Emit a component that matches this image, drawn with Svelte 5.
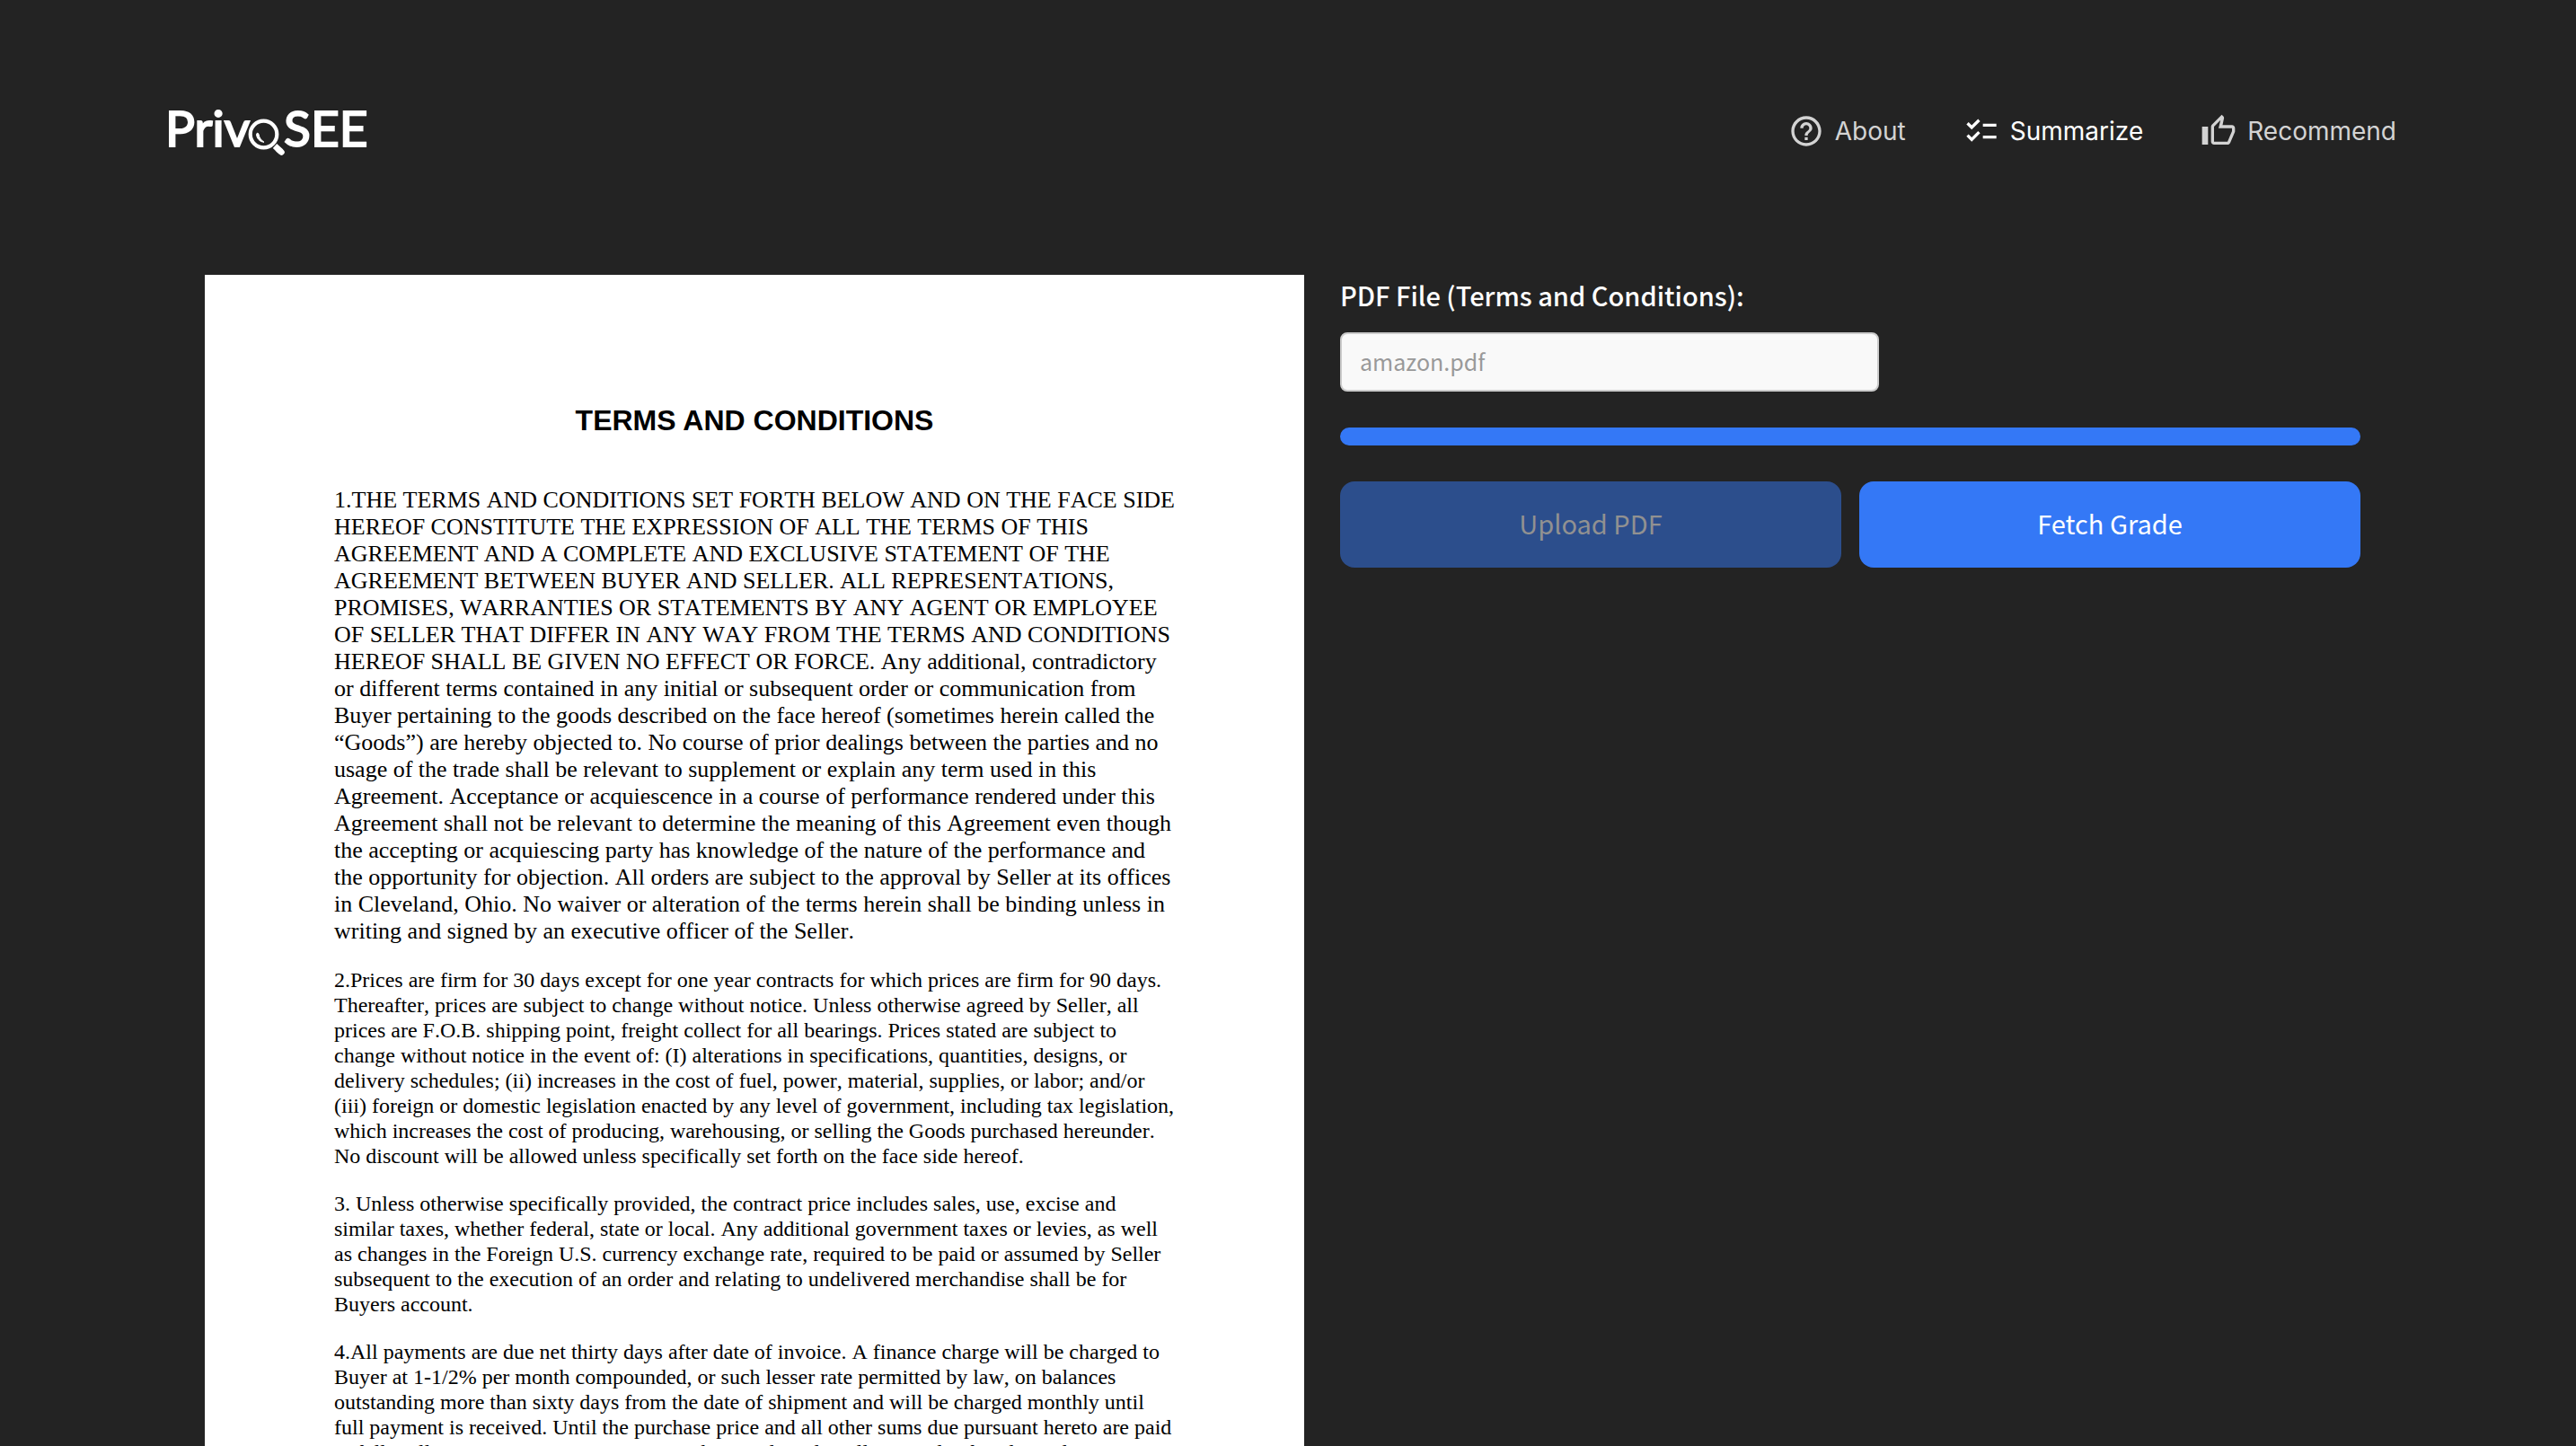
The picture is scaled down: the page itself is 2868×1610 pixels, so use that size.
<script>
  const paragraphs = [
    {
      large: true,
      lines: [
        '1.THE TERMS AND CONDITIONS SET FORTH BELOW AND ON THE FACE SIDE',
        'HEREOF CONSTITUTE THE EXPRESSION OF ALL THE TERMS OF THIS',
        'AGREEMENT AND A COMPLETE AND EXCLUSIVE STATEMENT OF THE',
        'AGREEMENT BETWEEN BUYER AND SELLER. ALL REPRESENTATIONS,',
        'PROMISES, WARRANTIES OR STATEMENTS BY ANY AGENT OR EMPLOYEE',
        'OF SELLER THAT DIFFER IN ANY WAY FROM THE TERMS AND CONDITIONS',
        'HEREOF SHALL BE GIVEN NO EFFECT OR FORCE. Any additional, contradictory',
        'or different terms contained in any initial or subsequent order or communication from',
        'Buyer pertaining to the goods described on the face hereof (sometimes herein called the',
        '“Goods”) are hereby objected to. No course of prior dealings between the parties and no',
        'usage of the trade shall be relevant to supplement or explain any term used in this',
        'Agreement. Acceptance or acquiescence in a course of performance rendered under this',
        'Agreement shall not be relevant to determine the meaning of this Agreement even though',
        'the accepting or acquiescing party has knowledge of the nature of the performance and',
        'the opportunity for objection. All orders are subject to the approval by Seller at its offices',
        'in Cleveland, Ohio. No waiver or alteration of the terms herein shall be binding unless in',
        'writing and signed by an executive officer of the Seller.'
      ]
    },
    {
      lines: [
        '2.Prices are firm for 30 days except for one year contracts for which prices are firm for 90 days.',
        'Thereafter, prices are subject to change without notice. Unless otherwise agreed by Seller, all',
        'prices are F.O.B. shipping point, freight collect for all bearings. Prices stated are subject to',
        'change without notice in the event of: (I) alterations in specifications, quantities, designs, or',
        'delivery schedules; (ii) increases in the cost of fuel, power, material, supplies, or labor; and/or',
        '(iii) foreign or domestic legislation enacted by any level of government, including tax legislation,',
        'which increases the cost of producing, warehousing, or selling the Goods purchased hereunder.',
        'No discount will be allowed unless specifically set forth on the face side hereof.'
      ]
    },
    {
      lines: [
        '3. Unless otherwise specifically provided, the contract price includes sales, use, excise and',
        'similar taxes, whether federal, state or local. Any additional government taxes or levies, as well',
        'as changes in the Foreign U.S. currency exchange rate, required to be paid or assumed by Seller',
        'subsequent to the execution of an order and relating to undelivered merchandise shall be for',
        'Buyers account.'
      ]
    },
    {
      lines: [
        '4.All payments are due net thirty days after date of invoice. A finance charge will be charged to',
        'Buyer at 1-1/2% per month compounded, or such lesser rate permitted by law, on balances',
        'outstanding more than sixty days from the date of shipment and will be charged monthly until',
        'full payment is received. Until the purchase price and all other sums due pursuant hereto are paid',
        'in full, Seller retains a security interest in the Goods and in all proceeds of said Goods. Buyer'
      ]
    }
  ];
</script>

<div class="app">
  <header>
    <a class="logo" href="#home" aria-label="PrivoSEE">
      <span>Priv</span>
      <svg viewBox="0 0 42 42" aria-hidden="true">
        <circle cx="17.500" cy="17.500" r="14.800" fill="none" stroke="#fff" stroke-width="4.200" />
        <path d="M9.500 17.500c.3 4.800 3.800 8.500 8.500 8.800-2.600-1.800-5.500-4.700-6-8.900-.3-1.600-2.300-1.500-2.500.1z" fill="#fff" stroke="#fff" />
        <path d="M30 30.500l7 6.500" stroke="#fff" stroke-width="6.500" />
        <path d="M34 34.500l3.500 3" stroke="#fff" stroke-width="6.500" stroke-linecap="round" />
      </svg>
      <span>SEE</span>
    </a>
    <nav>
      <a href="#about">
        <svg viewBox="0 0 24 24" aria-hidden="true"><path d="M11 18h2v-2h-2v2zm1-16C6.480 2 2 6.480 2 12s4.480 10 10 10 10-4.480 10-10S17.520 2 12 2zm0 18c-4.410 0-8-3.590-8-8s3.590-8 8-8 8 3.590 8 8-3.590 8-8 8zm0-14c-2.210 0-4 1.790-4 4h2c0-1.100.9-2 2-2s2 .9 2 2c0 2-3 1.750-3 5h2c0-2.250 3-2.500 3-5 0-2.210-1.790-4-4-4z" /></svg>
        About
      </a>
      <a href="#summarize" class="active" aria-current="page">
        <svg viewBox="0 0 24 24" aria-hidden="true"><path d="M22 7h-9v2h9V7zm0 8h-9v2h9v-2zM5.540 11L2 7.460l1.410-1.410 2.120 2.120 4.240-4.240 1.410 1.410L5.540 11zm0 8L2 15.460l1.410-1.410 2.120 2.120 4.240-4.240 1.410 1.410L5.540 19z" /></svg>
        Summarize
      </a>
      <a href="#recommend">
        <svg viewBox="0 0 24 24" aria-hidden="true"><path d="M9 21h9c.83 0 1.540-.5 1.840-1.220l3.020-7.050c.09-.23.14-.47.14-.73v-2c0-1.100-.9-2-2-2h-6.310l.95-4.570.03-.32c0-.41-.17-.79-.44-1.060L14.170 1 7.580 7.590C7.220 7.950 7 8.450 7 9v10c0 1.100.9 2 2 2zM9 9l4.340-4.340L12 10h9v2l-3 7H9V9zM1 9h4v12H1z" /></svg>
        Recommend
      </a>
    </nav>
  </header>

  <main>
    <article>
      <h1>TERMS AND CONDITIONS</h1>
      {#each paragraphs as p}
        <p class:large={p.large}>{p.lines.join('\n')}</p>
      {/each}
    </article>

    <form onsubmit={(e) => e.preventDefault()}>
      <label for="pdf">PDF File (Terms and Conditions):</label>
      <input id="pdf" type="text" placeholder="amazon.pdf" />
      <div class="progress" role="progressbar" aria-label="Upload progress" aria-valuenow="100" aria-valuemin="0" aria-valuemax="100"></div>
      <div class="actions">
        <button type="button" disabled>Upload PDF</button>
        <button type="submit">Fetch Grade</button>
      </div>
    </form>
  </main>
</div>

<style>
  :global(body) {
    background: #232323;
  }
  .app {
    box-sizing: border-box;
    height: 100vh;
    overflow: hidden;
    padding: 80px 200px 0 188px;
    display: flex;
    flex-direction: column;
    gap: 94px;
    color: #fff;
    font-family: "Noto Sans CJK SC", "Noto Sans", sans-serif;
  }
  header {
    display: flex;
    align-items: center;
    justify-content: space-between;
    height: 132px;
    flex: none;
  }
  .logo {
    display: flex;
    align-items: center;
    margin-left: -4px;
    padding-bottom: 8px;
    color: #fff;
    text-decoration: none;
    font: 400 55px/64px Lato, sans-serif;
    -webkit-text-stroke: 2px #fff;
  }
  .logo svg {
    width: 42px;
    height: 42px;
    margin: 22px -2px 0 -2px;
  }
  nav {
    display: flex;
    gap: 64px;
  }
  nav a {
    display: flex;
    align-items: center;
    gap: 12px;
    color: #d3d3d3;
    text-decoration: none;
    font: 400 28px/40px Inter, sans-serif;
  }
  nav a.active {
    color: #fff;
  }
  nav svg {
    width: 40px;
    height: 40px;
    fill: currentColor;
  }
  main {
    flex: 1;
    min-height: 0;
    display: grid;
    grid-template-columns: 1224fr 1136fr;
    gap: 40px;
    align-items: start;
    padding: 0 40px;
  }
  article {
    background: #fff;
    color: #000;
    padding: 142px 144px 0;
    font: 24px/28px "Liberation Serif", serif;
    font-kerning: none;
  }
  h1 {
    margin: 0 0 54px;
    text-align: center;
    font: 700 32px/40px "Liberation Sans", sans-serif;
  }
  p {
    margin: 0 0 25px;
    white-space: pre;
  }
  p.large {
    font-size: 26px;
    line-height: 30px;
  }
  form {
    display: flex;
    flex-direction: column;
    align-items: stretch;
  }
  label {
    font-size: 29px;
    line-height: 44px;
    font-weight: 500;
    margin-bottom: 20px;
  }
  input {
    box-sizing: border-box;
    width: 600px;
    max-width: 100%;
    height: 66px;
    padding: 0 20px 2px;
    border: 2px solid #ccc;
    border-radius: 8px;
    background: #f9f9f9;
    color: #333;
    font: 400 25px/40px "Noto Sans CJK SC", sans-serif;
  }
  input::placeholder {
    color: #999;
    opacity: 1;
  }
  .progress {
    height: 20px;
    margin: 40px 0;
    border-radius: 10px;
    background: #3478f6;
  }
  .actions {
    display: grid;
    grid-template-columns: 1fr 1fr;
    gap: 20px;
  }
  button {
    height: 96px;
    padding: 0 20px 4px;
    border: 0;
    border-radius: 16px;
    background: #3478f6;
    color: #fff;
    font: 400 29px/48px "Noto Sans CJK SC", sans-serif;
  }
  button:disabled {
    background: #2c4e8c;
    color: #919191;
  }
</style>
